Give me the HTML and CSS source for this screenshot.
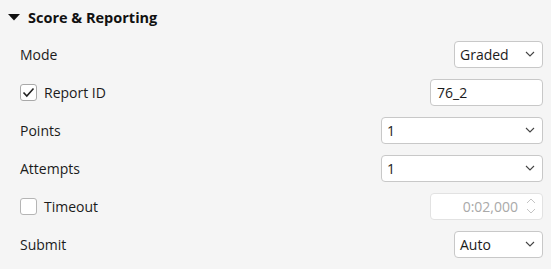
FILE: index.html
```html
<!DOCTYPE html>
<html>
<head>
<meta charset="utf-8">
<link rel="stylesheet" href="styles.css">
</head>
<body>
<div class="panel">
  <div class="header">
    <svg class="caret" width="12" height="7" viewBox="0 0 12 7"><polygon points="0,0 12,0 6,6.5" fill="#111"/></svg>
    <span class="title">Score &amp; Reporting</span>
  </div>
  <div class="row">
    <span class="label">Mode</span>
    <div class="ctl select w-sm"><span>Graded</span><svg class="chev" width="10" height="6" viewBox="0 0 10 6"><polyline points="1,1 5,5 9,1" fill="none" stroke="#444" stroke-width="1.1"/></svg></div>
  </div>
  <div class="row">
    <span class="label"><span class="cb checked"><svg width="13" height="11" viewBox="0 0 13 11"><polyline points="1.5,5.5 4.8,9 11.5,1.5" fill="none" stroke="#222" stroke-width="1.6"/></svg></span>Report ID</span>
    <div class="ctl input w-md"><span>76_2</span></div>
  </div>
  <div class="row">
    <span class="label">Points</span>
    <div class="ctl select w-lg"><span>1</span><svg class="chev" width="10" height="6" viewBox="0 0 10 6"><polyline points="1,1 5,5 9,1" fill="none" stroke="#444" stroke-width="1.1"/></svg></div>
  </div>
  <div class="row">
    <span class="label">Attempts</span>
    <div class="ctl select w-lg"><span>1</span><svg class="chev" width="10" height="6" viewBox="0 0 10 6"><polyline points="1,1 5,5 9,1" fill="none" stroke="#444" stroke-width="1.1"/></svg></div>
  </div>
  <div class="row">
    <span class="label"><span class="cb"></span>Timeout</span>
    <div class="ctl input disabled w-md"><span class="num">0:02,000</span><svg class="spin" width="10" height="20" viewBox="0 0 10 20"><polyline points="1,7 5,3 9,7" fill="none" stroke="#c4c4c4" stroke-width="1"/><polyline points="1,13 5,17 9,13" fill="none" stroke="#c4c4c4" stroke-width="1"/></svg></div>
  </div>
  <div class="row">
    <span class="label">Submit</span>
    <div class="ctl select w-sm"><span>Auto</span><svg class="chev" width="10" height="6" viewBox="0 0 10 6"><polyline points="1,1 5,5 9,1" fill="none" stroke="#444" stroke-width="1.1"/></svg></div>
  </div>
</div>
</body>
</html>
```
FILE: styles.css
```css
html, body {
  margin: 0;
  padding: 0;
  background: #f5f5f5;
}
body {
  font-family: "Open Sans", "Noto Sans", sans-serif;
  font-size: 14px;
  color: #1b1b1b;
}
.panel {
  width: 551px;
  height: 269px;
  box-sizing: border-box;
  padding: 0 8px 0 20px;
}
.header {
  height: 35px;
  display: flex;
  align-items: center;
  margin-left: -12px;
  gap: 8px;
}
.caret {
  display: block;
}
.title {
  font-weight: 700;
  font-size: 14.5px;
  color: #111;
}
.row {
  height: 38px;
  display: flex;
  align-items: center;
  justify-content: space-between;
}
.label {
  display: flex;
  align-items: center;
}
.cb {
  width: 15px;
  height: 15px;
  border: 1px solid #b5b5b5;
  border-radius: 3px;
  background: #fff;
  margin-right: 7px;
  display: flex;
  align-items: center;
  justify-content: center;
}
.cb.checked {
  border-color: #a9a9a9;
}
.ctl {
  height: 27px;
  box-sizing: border-box;
  border: 1px solid #c8c8c8;
  border-radius: 4px;
  background: #fff;
  display: flex;
  align-items: center;
  padding: 0 6px 0 5px;
  color: #1b1b1b;
}
.select {
  justify-content: space-between;
}
.chev {
  display: block;
  margin-right: 1px;
}
.w-sm { width: 89px; }
.w-md { width: 113px; }
.w-lg { width: 162px; }
.input {
  padding-left: 6px;
}
.disabled {
  border-color: #e2e2e2;
  justify-content: flex-end;
  color: #a9a9a9;
}
.num {
  margin-right: 8px;
}
.spin {
  display: block;
}
```
